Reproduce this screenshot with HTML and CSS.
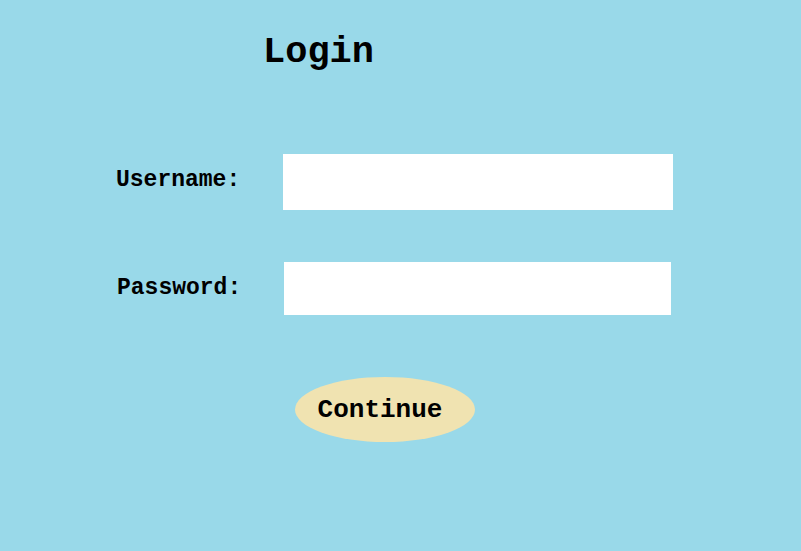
FILE: index.html
```html
<!DOCTYPE html>
<html>
<head>
<meta charset="utf-8">
<link rel="stylesheet" href="styles.css">
</head>
<body>
<div class="page">
  <h1 class="title">Login</h1>
  <div class="row row-user">
    <label class="label">Username:</label>
    <input class="field field-user" type="text">
  </div>
  <div class="row row-pass">
    <label class="label">Password:</label>
    <input class="field field-pass" type="password">
  </div>
  <button class="btn">Continue</button>
</div>
</body>
</html>
```
FILE: styles.css
```css
html, body {
  margin: 0;
  padding: 0;
  background: #99d9e9;
  height: 100%;
}
.page {
  display: flex;
  flex-direction: column;
  align-items: flex-start;
  padding-top: 34px;
  font-family: "Liberation Mono", "Courier New", monospace;
  font-weight: bold;
  color: #000;
}
.title {
  margin: 0 0 0 263px;
  font-size: 37px;
  line-height: 36px;
  font-weight: bold;
}
.row {
  display: flex;
  align-items: center;
}
.row-user {
  margin: 84px 0 0 116px;
}
.row-pass {
  margin: 52px 0 0 117px;
}
.label {
  width: 167px;
  font-size: 23px;
  line-height: 22px;
  position: relative;
}
.row-user .label { top: -2px; }
.row-pass .label { top: -1px; }
.field {
  border: none;
  background: #fff;
  padding: 0;
  margin: 0;
  outline: none;
}
.field-user {
  width: 390px;
  height: 56px;
}
.field-pass {
  width: 387px;
  height: 53px;
}
.btn {
  margin: 62px 0 0 295px;
  width: 180px;
  height: 65px;
  border: none;
  border-radius: 50%;
  background: #f0e3b1;
  font-family: "Liberation Mono", "Courier New", monospace;
  font-weight: bold;
  font-size: 26px;
  color: #000;
  padding: 0 10px 0 0;
}
```
